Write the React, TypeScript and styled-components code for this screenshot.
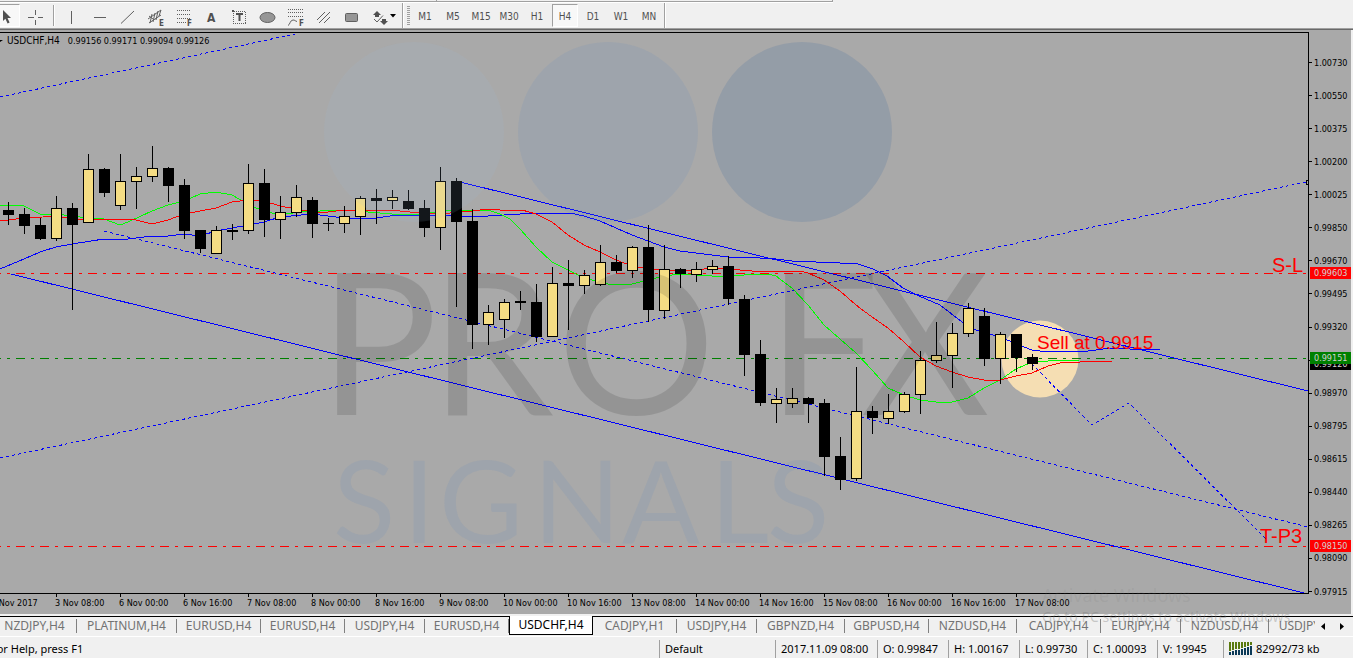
import React from 'react';
import styled, { createGlobalStyle } from 'styled-components';

const UI_FONT = '"Noto Sans", "Open Sans", sans-serif';
const CHART_FONT = '"DejaVu Sans Condensed", "DejaVu Sans", sans-serif';

const GlobalStyle = createGlobalStyle`
  * { box-sizing: border-box; }
  body { margin: 0; background: #f0f0f0; font-family: ${UI_FONT}; }
`;

const Page = styled.div`
  display: flex;
  flex-direction: column;
  overflow: hidden;
`;

/* ---------- toolbar ---------- */

const UpperStrip = styled.div`
  display: flex;
  width: 833px;
  height: 3px;
  border-bottom: 1px solid #fff;
`;

const StripPart = styled.div<{ $grow?: boolean }>`
  width: ${(p) => (p.$grow ? 'auto' : '437px')};
  flex: ${(p) => (p.$grow ? 1 : 'none')};
  border-right: 1px solid #a0a0a0;
  border-bottom: 1px solid #a0a0a0;
`;

const Toolbar = styled.div`
  display: flex;
  align-items: center;
  height: 27px;
  padding-bottom: 1px;
  border-bottom: 1px solid #696969;
  box-shadow: inset 0 -1px 0 #a0a0a0;
`;

const ToolGroup = styled.div`
  display: flex;
  align-items: center;
`;

const ToolButton = styled.button<{ $pressed?: boolean }>`
  display: flex;
  align-items: center;
  justify-content: center;
  width: 28px;
  height: 23px;
  padding: 0;
  border: 1px solid;
  border-color: ${(p) => (p.$pressed ? '#a0a0a0 #fff #fff #a0a0a0' : 'transparent')};
  background: ${(p) => (p.$pressed ? '#f8f8f8' : 'transparent')};
`;

const PeriodButton = styled(ToolButton)`
  width: 26px;
  margin: 0 1px;
  padding-top: 3px;
  color: #505050;
  font: 10px/12px ${CHART_FONT};
`;

const CursorGroup = styled(ToolGroup)`
  margin-left: -8px;
  gap: 2px;
`;

const ArrowButton = styled(ToolButton)`
  width: 36px;
  justify-content: flex-start;
  padding-left: 4px;
`;

const Divider = styled.div<{ $full?: boolean }>`
  width: 2px;
  height: ${(p) => (p.$full ? '25px' : '21px')};
  margin: ${(p) => (p.$full ? '0 1px' : '0 2px 0 3px')};
  border-left: 1px solid #a0a0a0;
  border-right: 1px solid #fff;
`;

const Grip = styled.div`
  width: 3px;
  height: 20px;
  margin: 0 1px 0 2px;
  background: repeating-linear-gradient(#a0a0a0 0 1px, #f0f0f0 1px 2px);
`;

const Glyph = styled.svg`
  display: block;
  flex: none;
  width: 20px;
  height: 20px;
  fill: none;
  stroke: #606060;
  overflow: visible;

  text {
    fill: #505050;
    stroke: none;
    font-family: ${CHART_FONT};
    font-weight: bold;
  }
`;

const DropMark = styled.svg`
  flex: none;
  width: 6px;
  height: 4px;
  fill: #000;
`;

const DrawIcon = ({ name }: { name: string }) => {
  const shapes: Record<string, React.ReactNode> = {
    cursor: <path d="M7 4V15L9.4 12.8L11.6 17.5L13.6 16.5L11.5 12H15Z" fill="#505050" stroke="none" />,
    crosshair: <path d="M2 11.5H8M12 11.5H17M9.5 4V9M9.5 14V18.5" shapeRendering="crispEdges" />,
    vertical: <path d="M10.5 5V18" shapeRendering="crispEdges" />,
    horizontal: <path d="M5 11.5H17" shapeRendering="crispEdges" />,
    trend: <path d="M4 17.5L17 5" />,
    equidistant: (
      <>
        <path d="M3 13L16 4M4 17L16 9M7 8L5 17M10 7L8 16M13 5L11 14M16 4L14 10M4 10L8 13" />
        <text x="14" y="20" fontSize="8">E</text>
      </>
    ),
    fibo: (
      <>
        <path d="M4 4.5H18M4 8.5H18M4 12.5H18M4 16.5H13" strokeDasharray="1 1" shapeRendering="crispEdges" />
        <text x="14" y="20" fontSize="8">F</text>
      </>
    ),
    text: <text x="6" y="16" fontSize="12">A</text>,
    label: (
      <>
        <path d="M4.5 5.5H16.5V17.5H4.5Z" strokeDasharray="1 1" shapeRendering="crispEdges" />
        <path d="M3 4H5V6H3Z" fill="#505050" stroke="none" />
        <path d="M7 7H14V9H11.5V15H9.5V9H7Z" fill="#505050" stroke="none" />
      </>
    ),
    ellipse: <ellipse cx="10.5" cy="11.5" rx="7.5" ry="5" fill="#969696" />,
    fiboArc: (
      <>
        <path d="M3 3.5H18M3 6.5H18M3 10.5H18" strokeDasharray="1 1" shapeRendering="crispEdges" />
        <path d="M3 19.5C5 19 5 14 8 14C10 14 10 15 12 15.5" />
        <text x="14" y="20" fontSize="8">F</text>
      </>
    ),
    lines: <path d="M4 14L12 6M6 17L17 6M11 17L17 11" />,
    rectangle: <rect x="4.5" y="7.5" width="12" height="8" rx="1" fill="#969696" />,
    arrows: (
      <>
        <path d="M7 5L11 9H9V11H5V9H3Z M14 13H12V15H10L14 19L18 15H16V13Z" fill="#505050" stroke="none" />
        <path d="M4 13L7 16L13 9.5" />
      </>
    ),
  };
  return (
    <Glyph viewBox="0 0 20 20" aria-hidden="true">
      {shapes[name]}
    </Glyph>
  );
};

const DRAW_TOOLS = [
  'vertical', 'horizontal', 'trend', 'equidistant', 'fibo', 'text',
  'label', 'ellipse', 'fiboArc', 'lines', 'rectangle',
];
const PERIODS = ['M1', 'M5', 'M15', 'M30', 'H1', 'H4', 'D1', 'W1', 'MN'];

/* ---------- chart ---------- */

const ChartPanel = styled.main`
  position: relative;
  margin-right: 2px;
  padding-top: 2px;
  background: #a9a9a9;
  font: 9px/12px ${CHART_FONT};
  color: #000;
`;

const ChartBody = styled.div`
  display: flex;
`;

const Plot = styled.svg`
  display: block;
  flex: 1;
  min-width: 0;
  height: auto;
`;

const PriceAxis = styled.div`
  position: relative;
  display: flex;
  flex-direction: column;
  flex: none;
  width: 42px;
  padding-top: 14px;
  margin-bottom: -14px;
`;

const PriceLabel = styled.div`
  display: flex;
  flex: 1;
  align-items: center;

  &::before {
    content: '';
    width: 3px;
    height: 1px;
    margin-right: 2px;
    background: #000;
  }
`;

const PriceTag = styled.div<{ $top: string; $color: string }>`
  position: absolute;
  top: ${(p) => p.$top};
  left: 1px;
  right: 0;
  height: 12px;
  padding-left: 4px;
  background: ${(p) => p.$color};
  color: #d0d0d0;
`;

const TimeAxis = styled.div`
  display: flex;
  height: 20px;
  margin-left: -9px;
  overflow: hidden;
`;

const TimeLabel = styled.span`
  flex: none;
  width: 64px;
  white-space: nowrap;

  &::before {
    content: '';
    display: block;
    width: 1px;
    height: 3px;
    margin: 0 0 0 1px;
    background: #000;
  }
`;

const ChartHeading = styled.div`
  position: absolute;
  top: 5px;
  left: 0;
  display: flex;
  align-items: center;
  gap: 4px;

  &::before {
    content: '';
    width: 3px;
    height: 2px;
    background: #000;
    clip-path: polygon(0 0, 100% 0, 0 100%);
  }
`;

const SymbolTitle = styled.h1`
  margin: 0 4px 0 0;
  font: 10px/12px ${CHART_FONT};
`;

const ActivationNote = styled.div`
  position: absolute;
  right: 55px;
  bottom: -13px;
  z-index: 2;
  width: 254px;
  color: rgba(120, 120, 120, 0.35);
  font: 14px/20px ${UI_FONT};
  white-space: nowrap;
  pointer-events: none;
`;

const ActivationTitle = styled.div`
  color: rgba(120, 120, 120, 0.15);
  font: 18px/24px ${UI_FONT};
`;

const PRICES = [
  '1.00730', '1.00550', '1.00375', '1.00200', '1.00025', '0.99850', '0.99670', '0.99495', '0.99320',
  '', '0.98970', '0.98795', '0.98615', '0.98440', '0.98265', '0.98090', '0.97915',
];

const TIMES = [
  '2 Nov 2017', '3 Nov 08:00', '6 Nov 00:00', '6 Nov 16:00', '7 Nov 08:00', '8 Nov 00:00',
  '8 Nov 16:00', '9 Nov 08:00', '10 Nov 00:00', '10 Nov 16:00', '13 Nov 08:00', '14 Nov 00:00',
  '14 Nov 16:00', '15 Nov 08:00', '16 Nov 00:00', '16 Nov 16:00', '17 Nov 08:00',
];

// One bar every 16 units: high, low, body top, body bottom, rising (1) or falling (0).
const BARS: number[][] = [
  [202, 225, 210, 215, 0], [208, 234, 214, 226, 0], [218, 240, 225, 239, 0], [196, 241, 208, 239, 1],
  [203, 310, 208, 225, 0], [154, 223, 169, 223, 1], [168, 197, 169, 193, 0], [154, 210, 181, 206, 1],
  [167, 209, 176, 182, 1], [146, 182, 168, 177, 1], [167, 202, 168, 186, 0], [179, 239, 185, 231, 0],
  [230, 253, 230, 249, 0], [226, 254, 230, 254, 1], [224, 240, 230, 232, 0], [164, 234, 183, 231, 1],
  [169, 237, 183, 220, 0], [196, 239, 212, 220, 1], [185, 217, 197, 213, 1], [197, 238, 200, 224, 0],
  [218, 231, 223, 224, 0], [206, 233, 216, 224, 1], [196, 235, 198, 217, 1], [189, 224, 198, 201, 0],
  [190, 209, 197, 201, 1], [190, 210, 201, 209, 0], [200, 237, 208, 228, 0], [167, 250, 181, 228, 1],
  [178, 307, 181, 222, 0], [209, 349, 221, 325, 0], [305, 345, 312, 325, 1], [299, 338, 302, 320, 1],
  [291, 310, 301, 303, 0], [284, 342, 302, 337, 0], [267, 337, 283, 337, 1], [260, 330, 283, 286, 0],
  [270, 294, 275, 286, 1], [245, 286, 262, 285, 1], [255, 273, 262, 271, 0], [246, 278, 247, 271, 1],
  [225, 322, 247, 310, 0], [245, 319, 269, 311, 1], [268, 288, 269, 274, 0], [262, 282, 269, 275, 1],
  [260, 274, 266, 270, 1], [256, 305, 266, 299, 0], [295, 376, 299, 355, 0], [340, 406, 354, 403, 0],
  [388, 423, 399, 404, 1], [388, 408, 398, 404, 1], [397, 423, 398, 404, 0], [399, 476, 403, 457, 0],
  [437, 490, 456, 480, 0], [367, 481, 411, 479, 1], [406, 434, 411, 418, 0], [394, 424, 411, 419, 1],
  [392, 413, 394, 412, 1], [351, 414, 360, 395, 1], [322, 363, 355, 361, 1], [323, 388, 333, 356, 1],
  [303, 337, 308, 334, 1], [308, 366, 316, 359, 0], [332, 384, 334, 359, 1], [334, 372, 334, 358, 0],
  [354, 370, 357, 364, 0],
];

const FAST_AVERAGE =
  '0,205 16,205 24,206 30,209 40,214 64,215 88,218 104,219 112,222 120,225 128,222 152,211 168,205 184,201 ' +
  '200,194 216,192 232,195 248,204 256,208 272,213 288,214 304,211 320,211 344,210 368,212 392,214 416,215 ' +
  '430,213 448,210 488,210 500,214 510,219 520,229 536,247 552,262 568,270 584,278 608,284 618,285 632,284 ' +
  '648,280 664,276 680,274 696,275 712,276 728,276 744,275 768,274 776,276 792,288 808,305 824,325 840,339 ' +
  '856,353 872,370 888,388 904,395 920,400 936,402 952,402 968,398 984,388 1000,380 1016,369 1032,362 ' +
  '1048,361 1064,360 1079,360';

const MIDDLE_AVERAGE =
  '0,221 16,219 56,216 72,219 104,219 136,220 152,224 168,220 184,214 200,211 216,208 232,202 248,200 ' +
  '264,201 280,206 296,209 312,212 328,212 344,210 390,210 410,212 428,213 450,213 472,211 488,209 500,210 ' +
  '522,210 536,214 552,222 568,235 584,245 600,252 616,260 632,266 648,269 664,270 696,270 712,268 728,269 ' +
  '752,271 800,271 808,273 824,280 840,291 856,305 872,317 888,328 904,342 920,357 936,366 952,372 968,377 ' +
  '984,380 1000,380 1016,376 1032,373 1048,366 1064,362 1080,362 1112,361';

const SLOW_AVERAGE =
  '0,269 24,259 40,252 56,247 72,244 104,239 120,240 136,238 152,236 168,236 184,234 200,236 216,231 ' +
  '232,228 248,225 264,222 280,217 312,214 328,216 344,218 360,219 376,218 390,216 440,215 456,216 488,216 ' +
  '504,215 536,213 570,213 584,216 600,221 616,228 632,235 648,241 664,247 680,251 696,253 712,255 728,257 ' +
  '760,258 776,259 792,261 840,263 858,264 873,269 887,276 903,288 919,296 940,305 962,322 976,330 1000,337 ' +
  '1024,347 1032,350 1048,352 1056,351 1080,352 1096,350 1110,348 1130,349 1160,350';

const Chart = () => (
  <Plot viewBox="0 32 1309 562" role="img" aria-label="USDCHF four hour candlestick chart">
    <circle cx="1040" cy="359" r="38.5" fill="#f5deb3" />
    <g fill="none" strokeWidth="1" shapeRendering="crispEdges">
      <g strokeDasharray="9 6 3 6">
        <path d="M-8 273.5H1308" stroke="#f00" />
        <path d="M-8 358.5H1308" stroke="#008000" />
        <path d="M-8 546.5H1308" stroke="#f00" />
      </g>
      <g stroke="#00f">
        <path d="M456 181L1308 391M11 274L1304 593" />
        <path
          d="M104 231L1308 527M0 458L1306 182M0 97L295 34M1032 364L1092 425L1129 403L1268 541"
          strokeDasharray="3 3"
        />
        <polyline points={SLOW_AVERAGE} />
      </g>
      <polyline points={FAST_AVERAGE} stroke="#0f0" />
      <polyline points={MIDDLE_AVERAGE} stroke="#f00" />
    </g>
    <g shapeRendering="crispEdges">
      {BARS.map(([high, low, top, bottom, rising], i) => {
        const x = 8 + i * 16;
        return (
          <g key={x}>
            <rect x={x} y={high} width="1" height={low - high} />
            <rect x={x - 5} y={top} width="11" height={bottom - top} />
            {rising === 1 && (
              <rect x={x - 4} y={top + 1} width="9" height={bottom - top - 2} fill="#f5dd84" />
            )}
          </g>
        );
      })}
    </g>
    <g fontFamily='"Liberation Sans", Arial, sans-serif' fill="#f00" fontSize="20">
      <text x="1272" y="272">S-L</text>
      <text x="1037" y="349" fontSize="19">Sell at 0.9915</text>
      <text x="1260" y="543">T-P3</text>
    </g>
    <g fillOpacity="0.12">
      <circle cx="414" cy="132" r="90" fill="#9ebfe1" />
      <circle cx="608" cy="132" r="90" fill="#5382c4" />
      <circle cx="802" cy="132" r="90" fill="#044a9c" />
      <g fontFamily="Lato, sans-serif">
        <text x="319 430 557 767 861" y="415" fontSize="198">PROFX</text>
        <text x="333 403 439 533 622 710 767" y="543" fontSize="115" fill="#5382c4">SIGNALS</text>
      </g>
    </g>
    <g fill="none" stroke="#000" shapeRendering="crispEdges">
      <path d="M0 32.5H1308.5V593.5H0" />
      <path d="M1309 180.5H1306.5V184.5H1309" />
    </g>
  </Plot>
);

/* ---------- symbol tabs ---------- */

const TabBar = styled.nav`
  position: relative;
  display: flex;
  height: 21px;
  margin-top: 2px;
  padding-right: 38px;
  border-bottom: 1px solid #fff;
  box-shadow: inset 0 1px 0 #000;
`;

const TabList = styled.div`
  display: flex;
  flex: 1;
  min-width: 0;
  margin-left: -7px;
  overflow: hidden;
`;

const Tab = styled.button<{ $width: number; $active?: boolean }>`
  flex: none;
  width: ${(p) => p.$width}px;
  height: ${(p) => (p.$active ? '19px' : '14px')};
  margin-top: ${(p) => (p.$active ? '0' : '3px')};
  padding: 0;
  border: 0 solid ${(p) => (p.$active ? '#000' : '#808080')};
  border-width: ${(p) => (p.$active ? '0 1px 1px' : '0 1px 0 0')};
  background: ${(p) => (p.$active ? '#fff' : 'transparent')};
  color: ${(p) => (p.$active ? '#000' : '#737373')};
  font: 12px/14px ${UI_FONT};
`;

const TabScroll = styled.div`
  position: absolute;
  right: 5px;
  top: 4px;
  display: flex;
  gap: 7px;
`;

const ScrollButton = styled.button`
  display: flex;
  align-items: center;
  justify-content: center;
  width: 12px;
  height: 12px;
  padding: 0;
  border: 0;
  background: transparent;
`;

const TABS: [string, number][] = [
  ['NZDJPY,H4', 84], ['PLATINUM,H4', 100], ['EURUSD,H4', 84], ['EURUSD,H4', 84], ['USDJPY,H4', 80],
  ['EURUSD,H4', 84], ['USDCHF,H4', 84], ['CADJPY,H1', 84], ['USDJPY,H4', 80], ['GBPNZD,H4', 88],
  ['GBPUSD,H4', 84], ['NZDUSD,H4', 88], ['CADJPY,H4', 84], ['EURJPY,H4', 80], ['NZDUSD,H4', 88],
  ['USDJPY,H4', 80],
];

/* ---------- status bar ---------- */

const StatusBar = styled.footer`
  display: flex;
  align-items: center;
  height: 21px;
  padding-top: 2px;
  color: #000;
  font: 11px/17px ${UI_FONT};
  white-space: nowrap;
`;

const HelpText = styled.span`
  flex: 1;
  margin-left: -9px;
`;

const StatusCell = styled.span<{ $width: number }>`
  display: flex;
  align-items: center;
  gap: 4px;
  flex: none;
  width: ${(p) => p.$width}px;
  height: 18px;
  padding-left: 5px;
  border-left: 1px solid #a0a0a0;
`;

const STATUS: [string, number][] = [
  ['Default', 116], ['2017.11.09 08:00', 102], ['O: 0.99847', 71], ['H: 1.00167', 71],
  ['L: 0.99730', 68], ['C: 1.00093', 70], ['V: 19945', 66],
];

const TrafficIcon = () => (
  <svg width="23" height="13" aria-hidden="true" shapeRendering="crispEdges">
    {[3, 4, 5, 5, 6, 7, 8, 9].map((h, i) => (
      <g key={i}>
        <rect x={i * 3} y="0" width="2" height={12 - h} fill="#5b7a0f" />
        <rect x={i * 3} y={13 - h} width="2" height={h} fill="#0c3a58" />
      </g>
    ))}
  </svg>
);

export default function App() {
  return (
    <Page>
      <GlobalStyle />
      <UpperStrip>
        <StripPart />
        <StripPart $grow />
      </UpperStrip>
      <Toolbar>
        <CursorGroup>
          <ToolButton $pressed aria-label="Cursor"><DrawIcon name="cursor" /></ToolButton>
          <ToolButton aria-label="Crosshair"><DrawIcon name="crosshair" /></ToolButton>
        </CursorGroup>
        <Divider />
        <ToolGroup>
          {DRAW_TOOLS.map((tool) => (
            <ToolButton key={tool} aria-label={tool}><DrawIcon name={tool} /></ToolButton>
          ))}
          <ArrowButton aria-label="Arrows">
            <DrawIcon name="arrows" />
            <DropMark viewBox="0 0 6 4"><path d="M0 0H6L3 3.5Z" /></DropMark>
          </ArrowButton>
        </ToolGroup>
        <Divider $full />
        <Grip />
        <ToolGroup>
          {PERIODS.map((period) => (
            <PeriodButton key={period} $pressed={period === 'H4'}>{period}</PeriodButton>
          ))}
        </ToolGroup>
        <Divider $full />
      </Toolbar>

      <ChartPanel>
        <ChartBody>
          <Chart />
          <PriceAxis>
            {PRICES.map((price, i) => <PriceLabel key={i}>{price}</PriceLabel>)}
            <PriceTag $top="40.8%" $color="#f00">0.99603</PriceTag>
            <PriceTag $top="56.6%" $color="#000">0.99126</PriceTag>
            <PriceTag $top="55.5%" $color="#008000">0.99151</PriceTag>
            <PriceTag $top="88.2%" $color="#f00">0.98150</PriceTag>
          </PriceAxis>
        </ChartBody>
        <TimeAxis>
          {TIMES.map((time) => <TimeLabel key={time}>{time}</TimeLabel>)}
        </TimeAxis>
        <ChartHeading>
          <SymbolTitle>USDCHF,H4</SymbolTitle>
          <span>0.99156 0.99171 0.99094 0.99126</span>
        </ChartHeading>
        <ActivationNote>
          <ActivationTitle>Activate Windows</ActivationTitle>
          Go to PC settings to activate Windows.
        </ActivationNote>
      </ChartPanel>

      <TabBar>
        <TabList>
          {TABS.map(([label, width], i) => (
            <Tab key={i} $width={width} $active={label === 'USDCHF,H4'}>{label}</Tab>
          ))}
        </TabList>
        <TabScroll>
          <ScrollButton aria-label="Previous charts">
            <svg width="4" height="7"><path d="M4 0V7L0 3.5Z" /></svg>
          </ScrollButton>
          <ScrollButton aria-label="Next charts">
            <svg width="4" height="7"><path d="M0 0V7L4 3.5Z" /></svg>
          </ScrollButton>
        </TabScroll>
      </TabBar>

      <StatusBar>
        <HelpText>For Help, press F1</HelpText>
        {STATUS.map(([label, width]) => <StatusCell key={label} $width={width}>{label}</StatusCell>)}
        <StatusCell $width={130}>
          <TrafficIcon />
          82992/73 kb
        </StatusCell>
      </StatusBar>
    </Page>
  );
}
